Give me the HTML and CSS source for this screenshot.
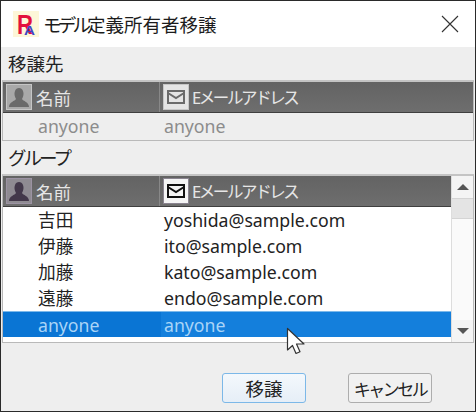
FILE: index.html
```html
<!DOCTYPE html>
<html lang="ja">
<head>
  <meta charset="UTF-8" />
  <title>モデル定義所有者移譲</title>
  <link rel="stylesheet" href="styles.css">
</head>
<body>
  <div class="window">
    <div class="titlebar">
      <svg class="logo" width="26" height="36" viewBox="0 0 26 36">
        <rect y="5" width="26" height="26" fill="#fdf6d8" />
        <text class="logo-r" x="4" y="28" textLength="16" lengthAdjust="spacingAndGlyphs">R</text>
        <text class="logo-a" x="11" y="29" textLength="11" lengthAdjust="spacingAndGlyphs">A</text>
      </svg>
      <span class="title"><span class="kana">モデル</span>定義所有者移譲</span>
      <svg class="close" width="18" height="18" viewBox="0 0 18 18">
        <path d="M1 1L17 17M17 1L1 17" stroke="#333" stroke-width="1.1" fill="none" />
      </svg>
    </div>

    <div class="content">
      <div class="section-label">移譲先</div>
      <div class="table table-target">
        <div class="head">
          <div class="col col-name">
            <span class="head-icon">
              <svg width="22" height="22" viewBox="0 0 22 22"><path d="M1 21C1 16 7 15 8 13C6.500 10 6 8 7 5C8 1 14 1 15 5C16 8 15.500 10 14 13C15 15 21 16 21 21Z" fill="#6a6a6a" /></svg>
            </span>
            名前
          </div>
          <div class="col col-mail">
            <span class="head-icon">
              <svg width="22" height="22" viewBox="0 0 22 22"><path d="M3 5H19V17H3ZM3 7L11 12L19 7" stroke="#6a6a6a" stroke-width="2" fill="none" /></svg>
            </span>
            <span class="mail-label">Eメールアドレス</span>
          </div>
        </div>
        <div class="row row-disabled">
          <div class="cell cell-name">anyone</div>
          <div class="cell cell-mail">anyone</div>
        </div>
      </div>

      <div class="section-label label-group">グループ</div>
      <div class="table table-group">
        <div class="list">
          <div class="head">
            <div class="col col-name">
              <span class="head-icon icon-dark">
                <svg width="22" height="22" viewBox="0 0 22 22"><path d="M1 21C1 16 7 15 8 13C6.500 10 6 8 7 5C8 1 14 1 15 5C16 8 15.500 10 14 13C15 15 21 16 21 21Z" fill="#43384a" /></svg>
              </span>
              名前
            </div>
            <div class="col col-mail">
              <span class="head-icon icon-light">
                <svg width="22" height="22" viewBox="0 0 22 22"><path d="M3 5H19V17H3ZM3 7L11 12L19 7" stroke="#111" stroke-width="2" fill="none" /></svg>
              </span>
              <span class="mail-label">Eメールアドレス</span>
            </div>
          </div>
          <div class="row"><div class="cell cell-name">吉田</div><div class="cell cell-mail">yoshida@sample.com</div></div>
          <div class="row"><div class="cell cell-name">伊藤</div><div class="cell cell-mail">ito@sample.com</div></div>
          <div class="row"><div class="cell cell-name">加藤</div><div class="cell cell-mail">kato@sample.com</div></div>
          <div class="row"><div class="cell cell-name">遠藤</div><div class="cell cell-mail">endo@sample.com</div></div>
          <div class="row row-selected"><div class="cell cell-name">anyone</div><div class="cell cell-mail">anyone</div></div>
        </div>
        <div class="scrollbar">
          <div class="scroll-btn"><svg width="16" height="8" viewBox="0 0 16 8"><path d="M2 7L8 1L14 7Z" fill="#555" /></svg></div>
          <div class="scroll-thumb"></div>
          <div class="scroll-track"></div>
          <div class="scroll-btn scroll-down"><svg width="16" height="8" viewBox="0 0 16 8"><path d="M2 1L8 7L14 1Z" fill="#555" /></svg></div>
        </div>
      </div>

      <div class="buttons">
        <button class="btn btn-default">移譲</button>
        <button class="btn btn-cancel">キャンセル</button>
      </div>
    </div>

    <svg class="cursor" width="24" height="30" viewBox="0 0 24 30">
      <path d="M1.500 1.500V23L6.500 18.500L10 26.500L14 24.800L10.500 17H18Z" fill="#fff" stroke="#333" stroke-width="1.200" stroke-linejoin="round" />
    </svg>
  </div>
</body>
</html>
```

FILE: styles.css
```css
* {
  box-sizing: border-box;
}

body {
  margin: 0;
  font-family: 'Noto Sans', 'Noto Sans CJK JP', sans-serif;
  font-size: 16px;
  color: #222;
  background: #eee;
}

.window {
  position: relative;
  width: 476px;
  height: 412px;
  border: 1px solid #2a2a2a;
  background: #eee;
  display: flex;
  flex-direction: column;
}

.titlebar {
  height: 46px;
  background: #fff;
  display: flex;
  align-items: center;
  padding: 0 16px 0 12px;
  flex: none;
}

.logo {
  flex: none;
}

.logo-r {
  font-family: 'Liberation Sans', sans-serif;
  font-weight: bold;
  font-size: 27px;
  fill: #e3103c;
}

.logo-a {
  font-family: 'Liberation Sans', sans-serif;
  font-weight: bold;
  font-size: 13px;
  fill: #3b48c4;
}

.title {
  margin-left: 4px;
  font-size: 18.5px;
  color: #1c1c1c;
}

.kana {
  letter-spacing: -3.8px;
}

.close {
  margin-left: auto;
}

.content {
  flex: 1;
  display: flex;
  flex-direction: column;
  padding: 0 1px 0 1px;
}

.section-label {
  height: 33px;
  line-height: 33px;
  padding-left: 6px;
  font-size: 18.5px;
}

.label-group {
  letter-spacing: -3px;
}

.table {
  border: 1px solid #b9b9b9;
  border-top: 2px solid #c4c4c4;
}

.table-target {
  height: 61px;
  background: #eee;
}

.table-group {
  height: 169px;
  display: flex;
  background: #fff;
}

.list {
  flex: 1;
  min-width: 0;
}

.head {
  height: 31px;
  display: flex;
  background: linear-gradient(#636363, #6e6e6e);
  border-bottom: 1px solid #3f3f3f;
  color: #e6e6e6;
}

.col {
  display: flex;
  align-items: center;
  font-size: 17.5px;
}

.col-name {
  width: 157px;
  padding-left: 3px;
  border-right: 1px solid #888;
}

.col-name .head-icon {
  margin-right: 4px;
}

.col-mail {
  flex: 1;
  padding-left: 3px;
}

.mail-label {
  font-size: 16.5px;
  letter-spacing: -2.4px;
}

.head-icon {
  width: 26px;
  height: 26px;
  margin-right: 3px;
  background: #a9a9a9;
  border: 1px solid #c6c6c6;
  display: flex;
  align-items: center;
  justify-content: center;
}

.col-mail .head-icon {
  background: #e4e4e4;
}

.icon-dark {
  background: #8f8b92;
  border-color: #9c93a3;
}

.col-mail .icon-light {
  background: #f5f5f5;
  border-color: #8a8490;
}

.row {
  height: 26px;
  display: flex;
  align-items: center;
  font-size: 17.7px;
  line-height: 27px;
  color: #222;
}

.row-disabled {
  height: 27px;
  color: #8c8c8c;
}

.row-selected {
  background: #0a75d4;
  color: #a9d4f7;
  border-top: 1px solid #7db9ea;
}

.row-selected .cell-mail {
  background: #147fdc;
}

.cell {
  height: 100%;
}

.cell-name {
  width: 158px;
  padding-left: 35px;
}

.cell-mail {
  flex: 1;
  padding-left: 3px;
}

.scrollbar {
  width: 22px;
  flex: none;
  display: flex;
  flex-direction: column;
  border-left: 1px solid #ddd;
  background: #fafafa;
}

.scroll-btn {
  height: 22px;
  display: flex;
  align-items: center;
  justify-content: center;
  background: #f4f4f4;
}

.scroll-thumb {
  height: 21px;
  background: #e4e4e4;
  border-top: 1px solid #d4d4d4;
  border-bottom: 1px solid #d4d4d4;
}

.scroll-track {
  flex: 1;
}

.scroll-down {
  height: 22px;
}

.buttons {
  display: flex;
  padding: 30px 0 0 220px;
}

.btn {
  height: 30px;
  border-radius: 3px;
  font-family: inherit;
  color: #222;
  padding: 0;
}

.btn-default {
  width: 84px;
  margin-right: 42px;
  font-size: 18.5px;
  background: linear-gradient(#f4f8fc, #e6eef7);
  border: 1px solid #7cb8e8;
}

.btn-cancel {
  width: 84px;
  font-size: 17px;
  letter-spacing: -2.5px;
  background: #f1f1f1;
  border: 1px solid #adadad;
}

.cursor {
  position: absolute;
  left: 285px;
  top: 326px;
}
```
